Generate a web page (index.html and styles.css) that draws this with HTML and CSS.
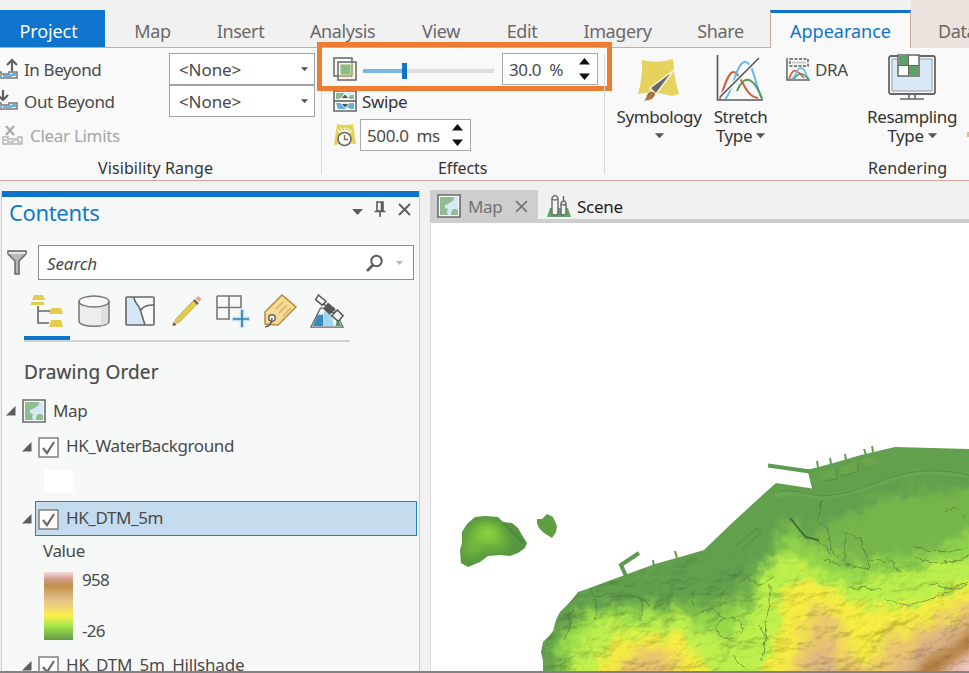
FILE: index.html
```html
<!DOCTYPE html>
<html lang="en">
<head>
<meta charset="utf-8">
<title>Map project</title>
<link rel="stylesheet" href="styles.css">
</head>
<body>
<svg class="defs" aria-hidden="true">
  <defs>
    <symbol id="map-icon" viewBox="0 0 24 24"><path d="M1 1h22v22H1z" fill="#f8faf9" stroke="#6b6b6b" stroke-width="1.6"/><path d="M3 3h18v18H3z" fill="#d5e8f5"/><path d="M3 3h14c0 3-1 4-3 5l-3 2-3 1v3l3 1-1 3 1 3H3zM14 21c0-4 1-6 4-6l3 1v5z" fill="#8fbd91"/></symbol>
    <symbol id="caret" viewBox="0 0 8 5"><path d="M0 0h8L4 4.5z" fill="currentColor"/></symbol>
    <symbol id="spin" viewBox="0 0 10 20"><path d="M0 6 5 0l5 6zM0 14h10l-5 6z" fill="#111"/></symbol>
    <symbol id="expand" viewBox="0 0 10 10"><path d="M0 9.5h9.5V0z" fill="#5c5c5c"/></symbol>
    <symbol id="check" viewBox="0 0 21 21"><path d="M1 1h19v19H1z" fill="#fff" stroke="#808080" stroke-width="1.5"/><path d="m5 11 4 5 7-11" fill="none" stroke="#6a6a6a" stroke-width="2.2"/></symbol>
    <symbol id="scale-strip" viewBox="0 0 22 8"><path d="M1 1h4v2h8V1h8v6H1z" fill="#fff" stroke="#777" stroke-width="1.5"/><path d="M2 4h4v2H2zM7 4h5v-1h4v2h4V2h-4v4H7z" fill="#69b4e3"/></symbol>
  </defs>
</svg>

<nav class="tabs">
  <div class="tab project">Project</div><div class="tab">Map</div><div class="tab">Insert</div><div class="tab">Analysis</div><div class="tab">View</div><div class="tab">Edit</div><div class="tab">Imagery</div><div class="tab">Share</div><div class="tab active">Appearance</div><div class="tab data">Data</div>
</nav>

<section class="ribbon">
  <div class="group visibility">
    <div class="rows">
      <div class="row">
        <svg class="ic-range" viewBox="0 0 18 24"><use href="#scale-strip" x="-4" y="14" width="22" height="8"/><path d="M12 14V4M7 8l5-5 5 5" fill="none" stroke="#606060" stroke-width="2.2"/></svg>
        <span class="lbl in">In Beyond</span>
        <div class="combo"><span>&lt;None&gt;</span><svg class="caret"><use href="#caret"/></svg></div>
      </div>
      <div class="row">
        <svg class="ic-range" viewBox="0 0 18 24"><use href="#scale-strip" x="-4" y="13" width="22" height="8"/><path d="M3 1v9M-2 6l5 5 5-5" fill="none" stroke="#606060" stroke-width="2.2"/></svg>
        <span class="lbl out">Out Beyond</span>
        <div class="combo"><span>&lt;None&gt;</span><svg class="caret"><use href="#caret"/></svg></div>
      </div>
      <div class="row disabled">
        <svg class="ic-clear" viewBox="0 0 21 20"><path d="m4 1 8 9m0-9-8 9" stroke="#a8a8a8" stroke-width="2.2"/><path d="M1 12v7h19v-7h-4v2H6v-2z" fill="#fafafa" stroke="#b5b5b5" stroke-width="1.4"/><path d="M2 15h4v2h5v-2h5v2h3" fill="none" stroke="#c8c8c8" stroke-width="2"/></svg>
        <span class="lbl clear">Clear Limits</span>
      </div>
    </div>
    <div class="caption c1">Visibility Range</div>
  </div>

  <div class="group effects">
    <div class="rows">
      <div class="row">
        <svg class="ic-24" viewBox="0 0 24 24"><path d="M1 1h18v18H1z" fill="#f7fbfb" stroke="#666" stroke-width="1.5"/><path d="M5 5h18v18H5z" fill="#fbf9ec" stroke="#666" stroke-width="1.5"/><path d="M7.500 7.500h13v13h-13z" fill="#ede6a4"/><path d="M7.500 7.500h10v10h-10z" fill="#8abc8c"/><path d="M5 19h14V5" fill="none" stroke="#777" stroke-width="1"/></svg>
        <div class="slider"><i class="fill"></i><i class="thumb"></i><i class="track"></i></div>
        <div class="spin pct"><span>30.0&nbsp; %</span><svg><use href="#spin"/></svg></div>
      </div>
      <div class="row">
        <svg class="ic-24" viewBox="0 0 24 24"><path d="M1 2h22v20H1z" fill="#fff" stroke="#666" stroke-width="1.6"/><path d="M3 4h18v6H3z" fill="#d8ecf6"/><path d="M3 4h8L9 8l-3 2H3zM15 10l2-4h4v4z" fill="#8abc8c"/><path d="M3 14h18v6h-4l-2-2-3 2H5z" fill="#60b1e4"/><path d="M1 12h22" stroke="#666" stroke-width="1.7"/><path d="M8 9.500 12 5l4 4.500zM8 14.500h8L12 19z" fill="#555" stroke="#fff" stroke-width=".8"/></svg>
        <span class="lbl swipe">Swipe</span>
      </div>
      <div class="row">
        <svg class="ic-24 flicker" viewBox="0 0 24 24"><path d="M4 1q8 2 16 0l3 20q-11-2-22 1z" fill="#e5d155"/><path d="m12 3 1 5 3-4-1 5 5-3-4 5H7L4 6l5 3-2-5 4 4z" fill="#fff"/><circle cx="11.500" cy="16" r="6.500" fill="#fff" stroke="#666" stroke-width="1.5"/><path d="M11.500 12v4.500H15" fill="none" stroke="#8a6840" stroke-width="1.4"/></svg>
        <div class="spin ms"><span>500.0&nbsp; ms</span><svg><use href="#spin"/></svg></div>
      </div>
    </div>
    <div class="caption c2">Effects</div>
    <div class="highlight"></div>
  </div>

  <div class="group rendering">
    <div class="bigs">
      <div class="big sym">
        <svg viewBox="0 0 48 48"><path d="M7 6q16 4 31-1 1 19 6 35-6 3-11 1-15-4-30-1Q8 22 7 6z" fill="#e5d35d"/><path d="m15 34 24-18-18 24z" fill="#666" stroke="#f4f1db" stroke-width="1.5"/><path d="M8 47c4-2 2-6 6-9 4-3 9 2 5 5-2 3-5 4-11 4z" fill="#a87544" stroke="#fff" stroke-width=".8"/></svg>
        <span>Symbology</span><svg class="caret"><use href="#caret"/></svg>
      </div>
      <div class="big stretch">
        <svg viewBox="0 0 48 48" fill="none"><path d="M4 45C8 33 12 19 17 18c8-1 11 25 25 26" stroke="#d35d3f" stroke-width="2"/><path d="M9 45c7-4 11-37 20-37s11 28 17 36" stroke="#64b5e9" stroke-width="2"/><path d="M21 37c9-21 19-9 25 8" stroke="#51985b" stroke-width="2"/><path d="M4 43 43 4" stroke="#fafafa" stroke-width="4"/><path d="M4 43 43 4M1.500 1v45H47" stroke="#5b5b5b" stroke-width="1.7"/></svg>
        <span>Stretch</span><span class="ty">Type<svg class="caret"><use href="#caret"/></svg></span>
      </div>
      <div class="dra">
        <svg viewBox="0 0 24 24" fill="none"><path d="M4 2h18v7H4z" stroke="#555" stroke-width="1.4" stroke-dasharray="3 1.5"/><path d="M6 5.500h14" stroke="#ccc" stroke-width="2"/><path d="M3 22c4-12 7-10 15-1" stroke="#d56143" stroke-width="1.7"/><path d="M5 22c5 0 5-11 10-11s4 8 8 11" stroke="#69b8e9" stroke-width="1.7"/><path d="M8 22c5-7 9-7 14 0" stroke="#569b5d" stroke-width="1.6"/><path d="M1 1v22h23" stroke="#666" stroke-width="1.5"/></svg>
        <span>DRA</span>
      </div>
      <div class="big resample">
        <svg viewBox="0 0 48 48"><rect x="1" y="2" width="46" height="38" rx="2" fill="#f4f4f4" stroke="#666" stroke-width="1.8"/><path d="M4 5h40v32H4z" fill="#d8eaf8" stroke="#999"/><path d="M21 41v4M27 41v4M12 45h24" stroke="#666" stroke-width="1.6"/><path d="M10 1h21v21H10z" fill="#fff" stroke="#666" stroke-width="1.5"/><path d="M11 2h9.500v9.500H11zM21 12h9v9h-9z" fill="#5ba365"/><path d="M10 11.500h21M20.500 1v21" stroke="#666"/></svg>
        <span>Resampling</span><span class="ty">Type<svg class="caret"><use href="#caret"/></svg></span>
      </div>
      <i class="next"></i>
    </div>
    <div class="caption c3">Rendering</div>
  </div>
</section>

<main class="work">
  <aside class="contents">
    <header>
      <h1>Contents</h1>
      <svg class="pane-tools" viewBox="0 0 60 20"><path d="M1 9h11l-5.500 6z" fill="#5c5c5c"/><path d="M26 2h6v9h-6zM30.500 2v9M23.500 11.500h11M29 12v5" fill="none" stroke="#5c5c5c" stroke-width="1.6"/><path d="m48 4 11 11M59 4 48 15" stroke="#5c5c5c" stroke-width="1.8"/></svg>
    </header>
    <div class="find">
      <svg class="funnel" viewBox="0 0 20 25"><path d="M1 1h18v3l-7 7v13H8V11L1 4z" fill="#b7babb" stroke="#666" stroke-width="1.5"/><path d="M1.500 3h17" stroke="#fff" stroke-width="1.3"/></svg>
      <div class="search"><span>Search</span><svg viewBox="0 0 40 20"><circle cx="11.500" cy="7" r="5.200" fill="none" stroke="#5c5c5c" stroke-width="2"/><path d="m8 11-6 6" stroke="#5c5c5c" stroke-width="2.600"/><path d="M31 7h7l-3.500 4z" fill="#b8b8b8"/></svg></div>
    </div>
    <div class="views">
      <svg viewBox="0 0 34 34"><path d="M4 1h9l2 5H2zM1 8h13v3H1zM21 14h10l2 6H19zM21 26h10l2 7H19z" fill="#e3cd4d"/><path d="M8 12v17h11M8 17h12" fill="none" stroke="#666" stroke-width="1.6"/></svg>
      <svg viewBox="0 0 34 34"><path d="M2 7v20c0 7 30 7 30 0V7" fill="#ededed" stroke="#777" stroke-width="1.500"/><path d="M24 11h7v18l-7 3z" fill="#dedede"/><ellipse cx="17" cy="7.500" rx="15" ry="5.500" fill="#f8f8f8" stroke="#777" stroke-width="1.500"/></svg>
      <svg viewBox="0 0 34 34"><path d="M3 3h28v28H3z" fill="#f9f9f9"/><path d="M3 3h9c0 7 4 6 6 14l4 14H3z" fill="#d5e7f6"/><rect x="3" y="3" width="28" height="28" rx="1" fill="none" stroke="#666" stroke-width="1.600"/><path d="M11 3c0 7 4 6 6 12l5 16M17 17c4-6 9-6 14-6" fill="none" stroke="#666" stroke-width="1.600"/></svg>
      <svg viewBox="0 0 34 34"><path d="m5 26 19-20 3.500 3.500L8.500 29z" fill="#e4cb48" stroke="#ae963c" stroke-width=".8"/><path d="m5 26-1.500 5 5-2z" fill="#e3bd8b"/><path d="m2.500 32 1-4 3 3z" fill="#555"/><path d="m24 6 4 4" stroke="#555" stroke-width="2"/><path d="m25.500 4.500 3-2.500 3 3-2.500 3z" fill="#eaa092"/></svg>
      <svg viewBox="0 0 34 34" fill="none"><path d="M1 2h24v12M1 2v23h13M1 13.500h24M13 2v23" stroke="#777" stroke-width="1.600"/><path d="M26 15v19M16 25h18" stroke="#bfe3f5" stroke-width="4.500"/><path d="M26 16v17M17 25h16" stroke="#397fa8" stroke-width="1.700"/></svg>
      <svg viewBox="0 0 34 34"><path d="M2 18 19 1l14 12-18 18-13-1z" fill="#f6dc92" stroke="#b58a42" stroke-width="1.500"/><path d="m13 15 7-7m-4 11 8-8m-4 11 8-8" stroke="#d1ad64" stroke-width="1.300"/><circle cx="9" cy="24" r="3.300" fill="#f8f8f8" stroke="#666" stroke-width="1.500"/><path d="M9 24q0 8-7 9" fill="none" stroke="#666" stroke-width="1.600"/></svg>
      <svg viewBox="0 0 36 36"><path d="m1 35 10-20h14l10 20z" fill="#eef5f8" stroke="#666" stroke-width="1.400"/><path d="m3 34 5-12h6v12z" fill="#388cbb"/><path d="m14 24c0-10 10-10 11 10H14z" fill="#a4d5ee"/><path d="m29 26 4 8h-6z" fill="#57985f"/><path d="M9 1l8 7-4 4-7-6zM29 17l6 6-5 6-7-6z" fill="#f5f5f5" stroke="#555" stroke-width="1.600"/><path d="m19 9 8 7-6 6-7-6z" fill="#555"/><path d="m14 10 12 11" stroke="#555" stroke-width="1.600"/></svg>
    </div>
    <h2>Drawing Order</h2>
    <div class="tree">
      <div class="node root"><svg class="exp"><use href="#expand"/></svg><svg class="mapic"><use href="#map-icon"/></svg><span>Map</span></div>
      <div class="node layer"><svg class="exp"><use href="#expand"/></svg><div class="item"><svg class="chk"><use href="#check"/></svg><span class="water">HK_WaterBackground</span></div></div>
      <div class="swatch"></div>
      <div class="node layer"><svg class="exp"><use href="#expand"/></svg><div class="item selected"><svg class="chk"><use href="#check"/></svg><span class="dtm">HK_DTM_5m</span></div></div>
      <div class="value">Value</div>
      <div class="legend"><i></i><div><span>958</span><span>-26</span></div></div>
      <div class="node layer last"><svg class="exp"><use href="#expand"/></svg><div class="item"><svg class="chk"><use href="#check"/></svg><span class="hill">HK_DTM_5m_Hillshade</span></div></div>
    </div>
  </aside>

  <section class="view">
    <div class="view-tabs">
      <div class="vt on"><svg class="mapic"><use href="#map-icon"/></svg><span>Map</span><svg class="x" viewBox="0 0 12 12"><path d="m1 1 10 10M11 1 1 11" stroke="#777" stroke-width="1.700"/></svg></div>
      <div class="vt"><svg class="scene" viewBox="0 0 24 24"><path d="m3 14-3 9h24l-3-9z" fill="#62a56b"/><path d="M5 4q3-5 6 0v16q-3 2-6 0zM14 9q3-4 5 0v11q-3 2-5 0zM5 5q3 2 6 0M14 10q3 2 5 0M16.500 2v5" fill="#f5f5f5" stroke="#666" stroke-width="1.400"/></svg><span class="sc">Scene</span></div>
    </div>
    <svg class="map" viewBox="431 223 538 448" preserveAspectRatio="none">
      <defs>
        <clipPath id="land"><path d="M543 671v-10l-2-9 2-10 4-4 2-2 4-5 3-11 4-8 8-8 7-8 3-4 9-3 35-13 33-12 25-7 24-7 27-26 25-23 20-18 36 5.500-4-16.500-1-2 23-6 31-9 34-8 75 2v223z"/></clipPath>
        <clipPath id="isle"><path d="M475 517l10-1 13 1 5 5 9 1 6 5 4 7 5 8-2 5-7 5-8 3-10-1-12 1-8 6-12 5-7-4-1-13 2-7v-11l5-8z"/></clipPath>
        <filter id="wide" x="-20%" y="-20%" width="140%" height="140%" color-interpolation-filters="sRGB"><feGaussianBlur stdDeviation="8" result="b"/><feTurbulence type="fractalNoise" baseFrequency=".06" numOctaves="4" seed="6" result="n"/><feDisplacementMap in="b" in2="n" scale="24" xChannelSelector="R" yChannelSelector="G"/></filter>
        <filter id="contour" x="-20%" y="-20%" width="140%" height="140%" color-interpolation-filters="sRGB"><feGaussianBlur stdDeviation="5.500" result="b"/><feTurbulence type="fractalNoise" baseFrequency=".07" numOctaves="4" seed="3" result="n"/><feDisplacementMap in="b" in2="n" scale="26" xChannelSelector="R" yChannelSelector="G"/></filter>
        <filter id="soft" x="-40%" y="-40%" width="180%" height="180%" color-interpolation-filters="sRGB"><feGaussianBlur stdDeviation="6"/></filter>
        <filter id="relief" x="0" y="0" width="100%" height="100%" color-interpolation-filters="sRGB"><feTurbulence type="fractalNoise" baseFrequency=".03 .045" numOctaves="5" seed="12" result="n"/><feDiffuseLighting in="n" surfaceScale="5" diffuseConstant="1.180" lighting-color="#fff"><feDistantLight azimuth="225" elevation="58"/></feDiffuseLighting></filter>
        <filter id="rough"><feTurbulence type="fractalNoise" baseFrequency=".12" numOctaves="2" result="n"/><feDisplacementMap in="SourceGraphic" in2="n" scale="7" xChannelSelector="R" yChannelSelector="G"/></filter>
        <linearGradient id="fade" x1="0" y1="0" x2="0" y2="1"><stop offset="0" stop-color="#000"/><stop offset=".35" stop-color="#fff"/></linearGradient>
        <mask id="hills"><path d="M535 545h440v130H535z" fill="url(#fade)"/></mask>
      </defs>
      <path d="M431 223h538v448H431z" fill="#fff"/>
      <g clip-path="url(#land)">
        <path d="M535 440h440v235H535z" fill="#62a04e"/>
        <g filter="url(#contour)">
          <path d="M553 690v-55l27-28 60-6 58-2 33-5 25-24 12-22 10-10 12-24 15 20 40-16 50-26 70-2 60-4v205z" fill="#76b54b"/>
          <path d="M559 695v-55l20-26 55-6 52 4 44-2 20-16 17-29 22-32 28 14 30 15 70-6 75-34v170z" fill="#92d64b"/>
          <path d="M566 695l9-56 22-18 45-6 43-1 22 20 23 4 14-20 14-30 20-36 22 8 36 19 60-3 80-22v140z" fill="#bcf04d"/>
          <path d="M586 695l12-40 18-22 28 6 36-7 26 31 8 32zM756 695l18-56 10-54 26-10 25 16 30 17 60-6 60-26v130z" fill="#f6ee42"/>
        </g>
        <g filter="url(#wide)">
          <path d="M612 700l10-38 20-14 29 3 13 49zM784 700l18-66 14-30 20 14 14 40 22 14 12-30 40-18 50-22v130z" fill="#eac471"/>
          <path d="M805 700l5-35 18-20 22 55zM890 700l13-43 40-29 50-21v95z" fill="#dcb489"/>
        </g>
        <g filter="url(#soft)"><path d="M910 680l18-22 24-10 26-26v22l-32 22-14 14z" fill="#ad7838"/><path d="M936 690l10-19 34-21v45z" fill="#f5c8c6"/></g>
        <g class="shade" mask="url(#hills)"><path d="M535 545h434v126H535z" filter="url(#relief)"/></g>
        <g fill="none" stroke="#49733b" stroke-width="1" opacity=".65" filter="url(#rough)">
          <path d="M822 498l-4 23 9 8 3 19 7 9M790 518l14 19 17 5 11 13M738 583l9-7 9 10 18-9M845 560v-28l14 7 8 18 3 12-24-4M870 560l24 2 7 12M915 557l24 7 30-8M850 588l32 1M885 600l28 5 56-20M915 548l30 5 24-6M718 621c-4 15 4 22 18 16 10-4 8-16-4-20zM590 588l6 10 18-6M595 600v19M641 597l8 10M945 512l11-5 9 12M700 611l14-2 8 10M824 560l17 6M770 585v20l-4 16-1 16M930 584l20 5 19-7M575 606l-8 12 4 10-8 12M610 597h32v24M690 590l4 15M760 625l6 14-3 22M733 655l12 14"/>
        </g>
        <path d="M790 518l9 11 7 8 13 3" fill="none" stroke="#39682f" stroke-width="1.400"/>
        <path d="M775 496c10-4 28-4 46 2 28-4 52-12 72-20 25-9 50-6 76-3" fill="none" stroke="#6eab58" stroke-width="5" opacity=".6"/>
        <path d="M816 474l20-7 1 12-13 3zM839 468l17-7 2 9-15 6zM861 460l13-3 5 7-15 2z" fill="#6ba64c"/>
        <path d="M780 491c15-1 25 2 40 5 30-1 50-12 72-19 25-8 50-8 77-2M823 481l14-2-1-11M841 476l17-4-1-9M735 546l22-18 4 5-20 17" fill="none" stroke="#4b843e" stroke-width="1" opacity=".7"/>
      </g>
      <path d="M626 576l-5-11 18-12M768 465.500l42 6" fill="none" stroke="#5e9a50" stroke-width="4"/>
      <path d="M654 566l-1-6M677 558l-2-7M818 467l-1-6M831 464l-1-6M846 460l-1-6M866 455l-2-6M873 452l-1-6" stroke="#609d50" stroke-width="2"/>
      <g clip-path="url(#isle)"><path d="M455 510h80v65h-80z" fill="#579540"/><path d="M462 552l8-24 15-8 14 6 10 14-4 9-23 1-10 9z" fill="#74bb3d" filter="url(#soft)"/><ellipse cx="488" cy="533" rx="9" ry="6" fill="#a0e03e" filter="url(#soft)"/><path d="M503 522l8 9 12 11" fill="none" stroke="#3f7b35" stroke-width="2" opacity=".5"/></g>
      <path d="M537 519l5 0 5-5 6 3 4 9-1 6-4 6-8-5-5-5-2-5z" fill="#5f9d43"/>
    </svg>
  </section>
</main>
<div class="edge"></div>
</body>
</html>
```
FILE: styles.css
```css
* { box-sizing: border-box; }
body { margin: 0; width: 969px; height: 673px; overflow: hidden; background: #f1f1f1; color: #4a4a4a; font: 17px/24px "Noto Sans", "Open Sans", sans-serif; letter-spacing: -.4px; white-space: nowrap; }
svg { display: block; flex: none; overflow: hidden; }
.defs { position: absolute; width: 0; height: 0; }
h1, h2 { margin: 0; font-weight: 400; }
i { display: block; }

.tabs { display: grid; grid-template-columns: 105px 95px 81px 123px 74px 88px 103px 103px 139px 58px; height: 48px; border-bottom: 1px solid #cfa79c; }
.tab { padding-top: 19px; text-align: center; color: #6c6868; font-size: 18px; letter-spacing: -.4px; }
.project { margin-top: 10px; height: 37px; padding: 9px 8px 0 0; background: #0f74cb; color: #f4faff; letter-spacing: -.1px; }
.active { margin: 10px 0 0 -2px; height: 38px; padding: 6px 0 0; background: #f9f9f9; border: solid #c9a59d; border-width: 0 1px; border-top: 3px solid #0f74cb; color: #0f74cb; letter-spacing: 0; }
.data { padding-left: 27px; background: #eee4df; text-align: left; overflow: hidden; }

.ribbon { display: grid; grid-template-columns: 322px 283px 364px; height: 133px; border-bottom: 1px solid #cfa79c; background: #f9f9f9; }
.group { position: relative; display: flex; flex-direction: column; }
.visibility::after, .effects::after { content: ""; position: absolute; right: 0; top: 6px; width: 1px; height: 120px; background: #d9d9d9; }
.rows { display: grid; grid-template-rows: 32px 32px 35px; padding-top: 5px; height: 110px; }
.row { display: flex; align-items: center; }
.row span { padding-top: 2px; }
.ic-range { width: 18px; height: 24px; margin-right: 6px; }
.ic-clear { width: 21px; height: 20px; margin: 0 7px 0 2px; }
.in, .out { width: 145px; }
.disabled { color: #a5a5a5; }
.clear { letter-spacing: -.3px; }
.combo { display: flex; align-items: center; width: 146px; height: 32px; padding: 0 6px 0 9px; border: 1.5px solid #a3a3a3; background: #fff; }
.combo span { flex: 1; letter-spacing: -.1px; }
.combo .caret { color: #555; }
.caret { width: 7px; height: 5px; }
.caption { font-size: 16px; line-height: 20px; letter-spacing: .1px; color: #333; }
.c1 { padding-left: 98px; }
.c2 { padding-left: 116px; letter-spacing: -.1px; }
.c3 { padding-left: 263px; }
.effects .rows { padding-left: 11px; }
.ic-24 { width: 24px; height: 24px; margin-right: 6px; }
.slider { display: flex; align-items: center; width: 131px; height: 20px; margin-right: 8px; padding-top: 3px; }
.fill { width: 39px; height: 4px; background: #78b9e3; }
.thumb { width: 5px; height: 16px; background: #0f74cb; }
.track { flex: 1; height: 4px; background: #dedede; }
.swipe { color: #333; margin-left: -1px; }
.spin { display: flex; align-items: center; justify-content: space-between; height: 32px; padding: 0 7px 0 6px; border: 1.5px solid #aaa; background: #fff; }
.spin svg { width: 11px; height: 22px; }
.pct { width: 96px; }
.ms { width: 111px; }
.flicker { margin-right: 3px; }
.highlight { position: absolute; left: -5px; top: -6px; width: 295px; height: 49px; border: 5px solid #ed7d31; }

.bigs { display: grid; grid-template-columns: 108px 55px 96px 96px 9px; height: 110px; }
.big { display: flex; flex-direction: column; align-items: center; padding-top: 6px; line-height: 19px; color: #333; }
.big > svg:first-child { width: 48px; height: 48px; margin-bottom: 5px; }
.stretch > svg:first-child { margin-left: -2px; }
.sym .caret { margin-top: 7px; color: #555; }
.ty { display: flex; align-items: center; gap: 4px; }
.ty .caret, .sym .caret { width: 9px; height: 6px; color: #555; }
.dra { display: flex; align-items: center; gap: 5px; height: 24px; margin: 9px 0 0 18px; }
.dra span { padding-top: 2px; }
.dra svg { width: 24px; height: 24px; }
.next { width: 2px; height: 5px; margin: 84px 0 0 7px; background: #e6b980; }

.work { display: grid; grid-template-columns: 420px 539px; column-gap: 10px; height: 490px; padding-top: 9px; }
.contents { margin-left: 1px; height: 481px; overflow: hidden; border: 1px solid #ccc; border-width: 0 1px; background: #f7f9f8; }
.contents header { display: flex; justify-content: space-between; height: 39px; padding: 2px 8px 0 7px; border-top: 6px solid #0f74cb; margin-top: 1px; }
h1 { font-size: 22px; line-height: 27px; color: #1079cb; letter-spacing: -.35px; }
.pane-tools { width: 60px; height: 20px; margin-top: 1px; }
.find { display: flex; align-items: center; height: 35px; margin-top: 15px; padding-left: 5px; }
.funnel { width: 20px; height: 25px; margin-right: 11px; }
.search { display: flex; align-items: center; justify-content: space-between; width: 376px; height: 35px; padding: 2px 8px 0 8px; border: 1.5px solid #8e8e8e; background: #fff; font-style: italic; letter-spacing: -.1px; }
.search svg { width: 40px; height: 20px; }
.views { display: grid; grid-template-columns: repeat(7, 34px); column-gap: 12.600px; width: 326px; height: 49px; margin: 13px 0 0 22px; padding-left: 6px; border-bottom: 2px solid #d0d2d1; background: linear-gradient(#0f74cb, #0f74cb) 0 100%/46px 4px no-repeat; }
.views svg { width: 34px; height: 34px; margin-top: 1px; }
h2 { margin: 17px 0 0 22px; font-size: 19px; line-height: 26px; letter-spacing: .15px; -webkit-text-stroke: .2px #4a4a4a; }
.node { display: flex; align-items: center; }
.exp { width: 10px; height: 10px; }
.mapic { width: 24px; height: 24px; }
.root { height: 36px; margin-top: 8px; padding-left: 4px; }
.root .mapic { margin: 0 7px 0 6px; }
.layer { height: 35px; padding-left: 20px; }
.item { display: flex; align-items: center; width: 382px; height: 35px; margin-left: 3px; padding-left: 3px; }
.item span { margin-top: -2px; }
.chk { width: 21px; height: 21px; margin-right: 7px; margin-top: 2px; }
.selected { border: 1.500px solid #1682d0; padding-left: 2px; background: #c5dcee; }
.swatch { width: 29px; height: 23px; margin: 6px 0 8px 42px; background: #fff; }
.value { margin: 3px 0 9px 41px; }
.legend { display: flex; height: 68px; margin-left: 42px; }
.legend i { width: 29px; margin-right: 9px; background: linear-gradient(#f5dcdd 0%, #d79e91 10%, #bf9249 20%, #e0bd87 39%, #efd27c 50%, #fdf04b 64%, #a5e74a 79%, #649946 100%); }
.legend div { display: flex; flex-direction: column; justify-content: space-between; margin: -4px 0 -3px; letter-spacing: -.7px; }
.last { margin-top: 8px; }
.hill { letter-spacing: -.2px; }

.view-tabs { display: flex; height: 33px; border-bottom: 4px solid #cecece; }
.vt { display: flex; align-items: center; padding-top: 3px; color: #222; }
.vt span { padding-top: 2px; letter-spacing: -.3px; }
.on { width: 108px; padding-left: 7px; background: #cecece; color: #737373; }
.on span { width: 41px; margin-left: 7px; }
.on .x { width: 13px; height: 13px; margin-left: 6px; }
.scene { width: 24px; height: 24px; margin: 0 6px 0 9px; }
.map { width: 539px; height: 448px; border-left: 1px solid #ddd; }
.shade { mix-blend-mode: multiply; opacity: .4; }
.edge { height: 2px; background: #838383; }
```
